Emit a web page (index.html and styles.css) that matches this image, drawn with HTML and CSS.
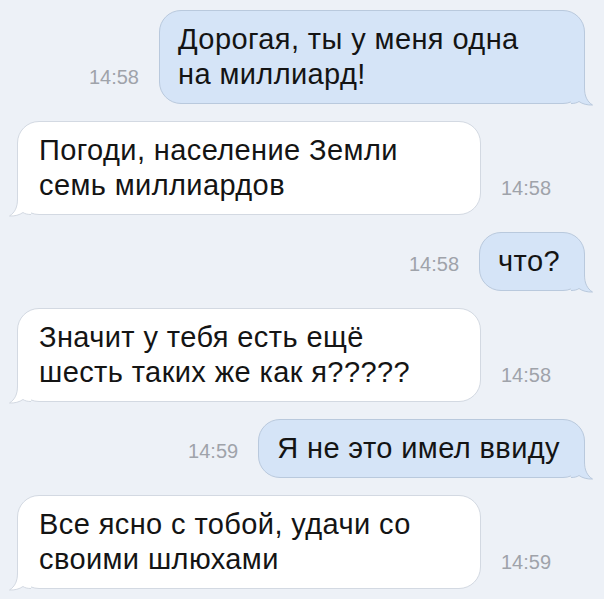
FILE: index.html
```html
<!DOCTYPE html>
<html lang="ru">
<head>
  <meta charset="UTF-8">
  <meta name="viewport" content="width=device-width, initial-scale=1.0">
  <title>Сообщения</title>
  <link rel="stylesheet" href="styles.css">
</head>
<body>
  <div class="chat">
    <div class="row row-out">
      <span class="time">14:58</span>
      <div class="bubble bubble-out bubble-first">
        Дорогая, ты у меня одна<br>на миллиард!
        <svg class="tail" width="24" height="24" viewBox="0 0 24 24"><path class="tail-fill" d="M0 0 H13 V6 C13.5 14 16 19.5 21.5 23 C16.5 23.3 11.5 22 8 19.5 C6 21 3 21.5 0 21.5 Z"/><path class="tail-line" d="M13.5 0 V6 C13.5 14 16 19.5 21.5 23 C16.5 23.3 11.5 22 8 19.5 C6 21 3 21.5 0 21.5"/></svg>
      </div>
    </div>

    <div class="row row-in">
      <div class="bubble bubble-in bubble-wide">
        Погоди, население Земли<br>семь миллиардов
        <svg class="tail" width="24" height="24" viewBox="0 0 24 24"><path class="tail-fill" d="M0 0 H13 V6 C13.5 14 16 19.5 21.5 23 C16.5 23.3 11.5 22 8 19.5 C6 21 3 21.5 0 21.5 Z"/><path class="tail-line" d="M13.5 0 V6 C13.5 14 16 19.5 21.5 23 C16.5 23.3 11.5 22 8 19.5 C6 21 3 21.5 0 21.5"/></svg>
      </div>
      <span class="time">14:58</span>
    </div>

    <div class="row row-out">
      <span class="time">14:58</span>
      <div class="bubble bubble-out">
        что?
        <svg class="tail" width="24" height="24" viewBox="0 0 24 24"><path class="tail-fill" d="M0 0 H13 V6 C13.5 14 16 19.5 21.5 23 C16.5 23.3 11.5 22 8 19.5 C6 21 3 21.5 0 21.5 Z"/><path class="tail-line" d="M13.5 0 V6 C13.5 14 16 19.5 21.5 23 C16.5 23.3 11.5 22 8 19.5 C6 21 3 21.5 0 21.5"/></svg>
      </div>
    </div>

    <div class="row row-in">
      <div class="bubble bubble-in bubble-wide">
        Значит у тебя есть ещё<br>шесть таких же как я?????
        <svg class="tail" width="24" height="24" viewBox="0 0 24 24"><path class="tail-fill" d="M0 0 H13 V6 C13.5 14 16 19.5 21.5 23 C16.5 23.3 11.5 22 8 19.5 C6 21 3 21.5 0 21.5 Z"/><path class="tail-line" d="M13.5 0 V6 C13.5 14 16 19.5 21.5 23 C16.5 23.3 11.5 22 8 19.5 C6 21 3 21.5 0 21.5"/></svg>
      </div>
      <span class="time">14:58</span>
    </div>

    <div class="row row-out">
      <span class="time">14:59</span>
      <div class="bubble bubble-out">
        Я не это имел ввиду
        <svg class="tail" width="24" height="24" viewBox="0 0 24 24"><path class="tail-fill" d="M0 0 H13 V6 C13.5 14 16 19.5 21.5 23 C16.5 23.3 11.5 22 8 19.5 C6 21 3 21.5 0 21.5 Z"/><path class="tail-line" d="M13.5 0 V6 C13.5 14 16 19.5 21.5 23 C16.5 23.3 11.5 22 8 19.5 C6 21 3 21.5 0 21.5"/></svg>
      </div>
    </div>

    <div class="row row-in">
      <div class="bubble bubble-in bubble-wide">
        Все ясно с тобой, удачи со<br>своими шлюхами
        <svg class="tail" width="24" height="24" viewBox="0 0 24 24"><path class="tail-fill" d="M0 0 H13 V6 C13.5 14 16 19.5 21.5 23 C16.5 23.3 11.5 22 8 19.5 C6 21 3 21.5 0 21.5 Z"/><path class="tail-line" d="M13.5 0 V6 C13.5 14 16 19.5 21.5 23 C16.5 23.3 11.5 22 8 19.5 C6 21 3 21.5 0 21.5"/></svg>
      </div>
      <span class="time">14:59</span>
    </div>
  </div>
</body>
</html>
```

FILE: styles.css
```css
* {
  box-sizing: border-box;
}
html, body {
  height: 100%;
}
body {
  margin: 0;
  background: #edf1f7;
  font-family: 'Liberation Sans', Arial, sans-serif;
  color: #141414;
  overflow: hidden;
}
.chat {
  display: flex;
  flex-direction: column;
  gap: 17px;
  padding: 10px 19px 0 17px;
}
.row {
  display: flex;
  align-items: flex-end;
  gap: 20px;
}
.row-out {
  justify-content: flex-end;
}
.time {
  font-size: 20px;
  line-height: 24px;
  color: #9fa3aa;
  padding-bottom: 15px;
  white-space: nowrap;
}
.bubble {
  position: relative;
  font-size: 29px;
  line-height: 35px;
  letter-spacing: 0.4px;
  border: 1px solid;
  border-radius: 22px;
  padding: 11px 24px 11px 18px;
  white-space: nowrap;
}
.bubble-out {
  background: #d5e4f7;
  border-color: #b9c9dd;
}
.bubble-in {
  background: #fff;
  border-color: #d3d9e2;
  padding-left: 21px;
}
.bubble-first {
  width: 426px;
}
.bubble-wide {
  width: 464px;
}
.tail {
  position: absolute;
  bottom: -3px;
  right: -11px;
  overflow: visible;
}
.bubble-in .tail {
  right: auto;
  left: -11px;
  transform: scaleX(-1);
}
.tail-line {
  fill: none;
  stroke-width: 1;
}
.bubble-out .tail-fill {
  fill: #d5e4f7;
}
.bubble-out .tail-line {
  stroke: #b9c9dd;
}
.bubble-in .tail-fill {
  fill: #fff;
}
.bubble-in .tail-line {
  stroke: #d3d9e2;
}
```
